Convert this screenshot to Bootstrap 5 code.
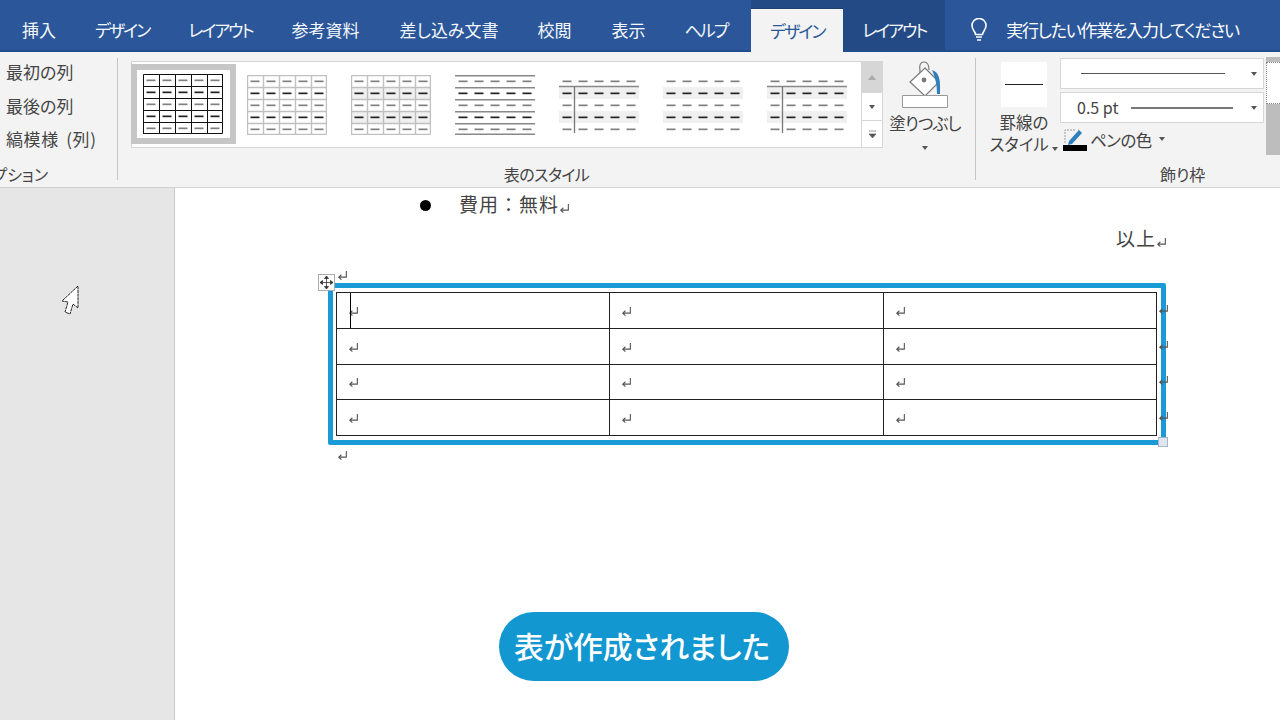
<!DOCTYPE html>
<html lang="ja">
<head>
  <meta charset="UTF-8" />
  <meta name="viewport" content="width=device-width, initial-scale=1.0"/>
  <title>表のデザイン</title>
  <link href="https://cdn.jsdelivr.net/npm/bootstrap@5.3.0/dist/css/bootstrap.min.css" rel="stylesheet"/>
  <style>
    html, body { height: 720px; overflow: hidden; }
    body {
      width: 1280px;
      font-family: "Noto Sans CJK JP", "Liberation Sans", sans-serif;
      font-feature-settings: "palt";
      color: #3a3a3a;
      background: #fff;
    }

    /* タブ */
    .tabbar { height: 52px; background: #2b579a; color: #fff; border-bottom: 2px solid #1f4c8c; font-size: 17px; }
    .tabitem { padding: 0 19.5px; line-height: 60px; height: 50px; white-space: nowrap; color: #f4f7fb; }
    .tabitem:first-child { margin-left: 2.5px; }
    .tabshift { margin-left: 1px; }
    .kanatight { letter-spacing: -2px; }
    .ctxgroup { background: #234a84; height: 50px; margin-left: 4.5px; }
    .ctxgroup .tabitem:first-child { margin-left: 0; }
    .tabactive { background: #f3f3f3; color: #2b579a; height: 44px; margin-top: 8px; line-height: 44px; width: 92px; text-align: center; padding: 0; border-top: 1px solid #1f3f70; }
    .tabdark { width: 102px; padding: 0; text-align: center; }
    .tellme { margin-left: 24px; gap: 17px; line-height: 60px; height: 50px; letter-spacing: -1.3px; }
    .tellme svg { margin-top: 18px; }

    /* リボン */
    .ribbon { height: 136px; background: #f3f3f3; border-bottom: 1px solid #d2d2d2; font-size: 16.5px; color: #444; overflow: hidden; }
    .rgroup { height: 135px; flex: none; }
    .rbody { height: 107px; }
    .rlabel { height: 28px; line-height: 30px; font-size: 16px; white-space: nowrap; }
    .rsep { width: 1px; height: 122px; margin-top: 6px; background: #c4c4c4; flex: none; }
    .optgroup { width: 117px; }
    .optrow { height: 33.5px; line-height: 33px; padding-left: 6px; white-space: nowrap; font-size: 17px; }
    .optwide { letter-spacing: .6px; word-spacing: 3px; }
    .optlist { padding-top: 3px; }
    .optlabel { padding-right: 69px; }
    .stylegroup { width: 857px; }
    .stylelabel { letter-spacing: -.6px; }
    .gallery { margin: 9px 0 0 13px; width: 752px; height: 87px; background: #fff; border: 1px solid #d6d6d6; }
    .tileitem { width: 104px; height: 85px; flex: none; }
    .tilesel { border: 6px solid #c6c6c6; height: 80px; width: 105px; margin: 2px -1px 0 -1px; padding-right: 2px; flex: none; }
    .gscroll { width: 21px; border-left: 1px solid #d6d6d6; margin-left: auto; flex: none; }
    .gbtn { flex: 1; }
    .gbtnoff { background: #d6d6d6; height: 31px; flex: none; }
    .gbtnmid { border-bottom: 1px solid #d6d6d6; height: 28px; flex: none; }
    .fillbtn { width: 76px; margin-left: 4px; margin-top: 7px; font-size: 16.5px; line-height: 20px; letter-spacing: -.8px; }
    .fillcaret { display: block; margin: 4px auto 0; }
    .bordergroup { width: 412px; }
    .borderlabel { padding-left: 184px; }
    .penstyle { width: 86px; padding-top: 10px; font-size: 16.5px; line-height: 22px; text-align: center; margin-left: 5px; flex: none; }
    .penbox { width: 46px; height: 45px; background: #fff; margin: 0 auto 4px; }
    .penright { width: 204px; padding-top: 6px; margin-left: -7px; flex: none; }
    .pensel { height: 31px; background: #fff; border: 1px solid #d6d6d6; padding: 0 6px 0 20px; font-size: 16px; line-height: 1.2; margin-bottom: 3px; }
    .penline { flex: 1; height: 1px; background: #555; margin: 0 26px 0 0; }
    .penthick { background: #777; margin: 0 18px 0 13px; height: 2px; }
    .pencolor { margin: 4px 0 0 3px; gap: 3px; font-size: 16.5px; line-height: 1.2; letter-spacing: -.5px; }
    .pentext { margin-top: 4px; }
    .caret { width: 0; height: 0; border-left: 3px solid transparent; border-right: 3px solid transparent; border-top: 4px solid #555; display: inline-block; }
    .gallerythumb { width: 14px; height: 98px; background: #bdbdbd; margin: 5px 0 0 2px; flex: none; }
    .thumbtop { height: 42px; margin-top: 5px; background: #fff; border-left: 1px dotted #888; border-top: 1px dotted #888; border-bottom: 1px dotted #888; }

    /* 本文 */
    .workarea { height: 532px; }
    .sidearea { width: 175px; background: #e6e6e6; border-right: 1px solid #c9c9c9; flex: none; position: relative; }
    .pagearea { flex: 1; padding-left: 143px; font-family: "Liberation Serif", "Noto Sans CJK JP", serif; font-size: 19px; letter-spacing: 1px; font-feature-settings: normal; color: #444; }
    .bulletline { margin-left: 102px; height: 36px; gap: 28px; line-height: 34px; }
    .bulletdot { width: 11px; height: 11px; background: #000; border-radius: 50%; flex: none; margin-top: 12px; }
    .rightline { width: 849px; text-align: right; height: 28px; line-height: 28px; margin-top: 2px; }
    .markline { height: 13px; padding-left: 19px; margin-top: 16px; position: relative; }
    .marklow { height: 17px; margin-top: 5px; }
    .tablewrap { width: 838px; margin-left: 10px; height: 162px; border: 5px solid #1a9ad6; padding: 4px 0 0 3px; position: relative; border-radius: 2px; }
    .doctable { table-layout: fixed; width: 820px; margin: 0; border-color: #222; }
    .doctable td { height: 35.75px; padding: 2px 0 0 11px; vertical-align: middle; border: 1px solid #222; line-height: 1; position: relative; }
    .caretbar { position: absolute; left: 13px; top: 0; bottom: 0; width: 1px; background: #000; }
    .movehandle { position: absolute; left: 143px; top: 86px; width: 17px; height: 17px; background: #fff; border: 1px solid #aaa; display: flex; align-items: center; justify-content: center; z-index: 2; }
    .rowmark { position: absolute; left: 825px; width: 8px; }
    .sizehandle { position: absolute; right: -7px; bottom: -7px; width: 10px; height: 10px; background: #dfe6ee; border: 1px solid #a9b6c6; }
    .mousearrow { position: absolute; left: 59px; top: 96px; }
    .calloutrow { margin-top: 145px; padding-left: 181px; width: 1000px; }
    .callout { background: #1397d1; color: #fff; width: 290px; height: 69px; line-height: 67px; padding-right: 4px; text-align: center; font-family: "Noto Sans CJK JP", sans-serif; font-feature-settings: "palt"; letter-spacing: 0; font-size: 29.8px; font-weight: 500; white-space: nowrap; }
  </style>
</head>
<body>

<svg width="0" height="0" class="position-absolute">
  <symbol id="retmark" viewBox="0 0 10 10">
    <path d="M8.500 1v5.500H2M4 4.300 1.600 6.500 4 8.700" fill="none" stroke="#555" stroke-width="1"/>
  </symbol>
</svg>

<!-- タブ -->
<div class="tabbar d-flex align-items-start">
  <div class="tabitem">挿入</div>
  <div class="tabitem kanatight">デザイン</div>
  <div class="tabitem kanatight">レイアウト</div>
  <div class="tabitem">参考資料</div>
  <div class="tabitem tabshift">差し込み文書</div>
  <div class="tabitem">校閲</div>
  <div class="tabitem tabshift">表示</div>
  <div class="tabitem kanatight">ヘルプ</div>
  <div class="ctxgroup d-flex">
    <div class="tabitem tabactive kanatight">デザイン</div>
    <div class="tabitem tabdark kanatight">レイアウト</div>
  </div>
  <div class="tellme d-flex">
    <svg width="20" height="24" viewBox="0 0 20 24"><path d="M6.500 16.500c0-3-3.500-4.500-3.500-9a7 7 0 0 1 14 0c0 4.500-3.500 6-3.500 9zM7 19h6M8 22h4" fill="none" stroke="#fff" stroke-width="1.600"/></svg>
    <span>実行したい作業を入力してください</span>
  </div>
</div>

<!-- リボン -->
<div class="ribbon d-flex">
  <div class="rgroup optgroup d-flex flex-column">
    <div class="rbody optlist">
      <div class="optrow">最初の列</div>
      <div class="optrow">最後の列</div>
      <div class="optrow optwide">縞模様 (列)</div>
    </div>
    <div class="rlabel optlabel d-flex justify-content-end">表スタイルのオプション</div>
  </div>
  <div class="rsep"></div>

  <div class="rgroup stylegroup d-flex flex-column">
    <div class="rbody d-flex">
      <div class="gallery d-flex" id="gallery">
        <div class="gscroll d-flex flex-column">
          <div class="gbtnoff d-flex align-items-center justify-content-center"><svg width="8" height="5"><path d="M0 5 4 0l4 5z" fill="#aaa"/></svg></div>
          <div class="gbtnmid d-flex align-items-center justify-content-center"><span class="caret"></span></div>
          <div class="gbtn d-flex align-items-center justify-content-center"><svg width="9" height="9"><path d="M1 1h7M1 4h7l-3.500 4z" fill="#555" stroke="#555" stroke-width=".6"/></svg></div>
        </div>
      </div>
      <div class="fillbtn text-center">
        <svg width="48" height="50" viewBox="0 0 48 50" class="d-block mx-auto">
          <path d="M23 3c-4 0-5 4-4 9v6" fill="none" stroke="#777" stroke-width="1.200"/>
          <path d="M23 3c3 0 5 3 5 8" fill="none" stroke="#777" stroke-width="1.200"/>
          <path d="M24 9 38 23 24 37 9 23z" fill="#fff" stroke="#777" stroke-width="1.200"/>
          <circle cx="23" cy="21" r="2.400" fill="#777"/>
          <path d="M31 11c6 2 9 7 8 24h-3c0-8-1-14-5-24z" fill="#2e7fbd"/>
          <path d="M1.500 36.500h45v12h-45z" fill="#fff" stroke="#999"/>
        </svg>
        <div class="mt-1">塗りつぶし</div>
        <span class="caret fillcaret"></span>
      </div>
    </div>
    <div class="rlabel text-center stylelabel">表のスタイル</div>
  </div>
  <div class="rsep"></div>

  <div class="rgroup bordergroup d-flex flex-column">
    <div class="rbody d-flex">
      <div class="penstyle">
        <div class="penbox d-flex align-items-center justify-content-center"><svg width="38" height="2"><path d="M0 .5h38" stroke="#222"/></svg></div>
        <div>罫線の</div>
        <div class="text-nowrap">スタイル <span class="caret"></span></div>
      </div>
      <div class="penright">
        <div class="pensel d-flex align-items-center"><div class="penline"></div><span class="caret"></span></div>
        <div class="pensel d-flex align-items-center ps-3"><span>0.5 pt</span><div class="penline penthick"></div><span class="caret"></span></div>
        <div class="pencolor d-flex align-items-center">
          <svg width="24" height="24" viewBox="0 0 24 24">
            <path d="M2 16V3h10M15 3h1" fill="none" stroke="#999" stroke-dasharray="2 1"/>
            <path d="M6 14 16 3l3 3-10 11-4 1z" fill="#2e7fbd"/>
            <path d="M0 18h24v6H0z" fill="#000"/>
          </svg>
          <span class="pentext">ペンの色</span>
          <span class="caret ms-1"></span>
        </div>
      </div>
      <div class="gallerythumb"><div class="thumbtop"></div></div>
    </div>
    <div class="rlabel borderlabel">飾り枠</div>
  </div>
</div>

<!-- 本文 -->
<div class="workarea d-flex">
  <div class="sidearea">
    <svg class="mousearrow" width="22" height="32" viewBox="0 0 22 32">
      <path d="M19 2 3 17l6 1-3 10 5 2 3-10 5 4z" fill="#fff" stroke="#222" stroke-width="1" stroke-dasharray="3 .6"/>
    </svg>
  </div>
  <div class="pagearea position-relative">
    <div class="bulletline d-flex">
      <span class="bulletdot"></span>
      <span class="d-flex align-items-center">費用：無料<svg width="11" height="11" class="mt-1"><use href="#retmark"/></svg></span>
    </div>
    <div class="rightline d-flex justify-content-end align-items-center">以上<svg width="11" height="11" class="mt-1"><use href="#retmark"/></svg></div>

    <div class="movehandle">
      <svg width="13" height="13" viewBox="0 0 13 13"><path d="M6.500 0v13M0 6.500h13M6.500 0 4.500 2.500h4zM6.500 13l-2-2.500h4zM0 6.500 2.500 4.500v4zM13 6.500l-2.500-2v4z" fill="#333" stroke="#333" stroke-width=".8"/></svg>
    </div>
    <div class="markline"><svg width="11" height="11" class="d-block"><use href="#retmark"/></svg></div>

    <div class="tablewrap" id="tablewrap">
      <table class="table doctable">
        <colgroup><col style="width:273px"><col style="width:274px"><col style="width:273px"></colgroup>
        <tbody id="doctbody"></tbody>
      </table>
      <span class="sizehandle"></span>
    </div>

    <div class="markline marklow"><svg width="11" height="11" class="d-block"><use href="#retmark"/></svg></div>

    <div class="calloutrow">
      <div class="callout rounded-pill">表が作成されました</div>
    </div>
  </div>
</div>

<script>
  // ギャラリーのサムネイル
  function tileSvg(kind) {
    let s = '<svg width="80" height="60" viewBox="0 0 80 60">';
    const rowH = 12;
    const line = kind === 1 ? '#111' : '#c0c0c0';
    // 縞
    if (kind === 3 || kind === 5 || kind === 6 || kind === 7) {
      [1, 3].forEach(r => { s += `<rect x="0" y="${r * rowH}" width="80" height="${rowH}" fill="#f0f0f0"/>`; });
    }
    // ダッシュ
    for (let r = 0; r < 5; r++) {
      for (let c = 0; c < 5; c++) {
        const x = c * 16 + 3.5;
        const y = r * rowH + 6;
        const color = r % 2 ? '#222' : '#808080';
        s += `<rect x="${x}" y="${y - 0.5}" width="9" height="1.7" fill="${color}"/>`;
      }
    }
    // 罫線
    if (kind <= 3) {
      for (let i = 0; i <= 5; i++) {
        const off = i === 5 ? -0.5 : 0.5;
        s += `<path d="M${i * 16} 0V60M0 ${i * 12}H80" stroke="${line}" stroke-width="${kind === 1 ? 1 : 1.4}" transform="translate(${off} ${off})"/>`;
      }
    }
    if (kind === 4) {
      for (let i = 0; i <= 5; i++) {
        s += `<rect x="0" y="${i === 5 ? 58.500 : i * 12}" width="80" height="1.500" fill="#888"/>`;
      }
    }
    if (kind === 5 || kind === 7) {
      s += '<path d="M0 11.500H80" stroke="#888" stroke-width="1.300"/><path d="M15.500 12V58" stroke="#777" stroke-width="1.300"/>';
    }
    return s + '</svg>';
  }

  const gallery = document.getElementById("gallery");
  const scroll = gallery.firstElementChild;
  [1, 2, 3, 4, 5, 6, 7].forEach(k => {
    const d = document.createElement("div");
    d.className = (k === 1 ? "tilesel" : "tileitem") + " d-flex align-items-center justify-content-center";
    d.innerHTML = tileSvg(k);
    gallery.insertBefore(d, scroll);
  });

  // 表の中身
  const mark = '<svg width="11" height="11" class="d-block"><use href="#retmark"/></svg>';
  const tbody = document.getElementById("doctbody");
  for (let r = 0; r < 4; r++) {
    const tr = document.createElement("tr");
    for (let c = 0; c < 3; c++) {
      const bar = r === 0 && c === 0 ? '<span class="caretbar"></span>' : '';
      tr.innerHTML += `<td>${bar}${mark}</td>`;
    }
    tbody.appendChild(tr);
  }
  // 行末マーク
  const wrap = document.getElementById("tablewrap");
  for (let r = 0; r < 4; r++) {
    const m = document.createElement("span");
    m.className = "rowmark";
    m.style.top = (16 + r * 35.5) + "px";
    m.innerHTML = '<svg width="11" height="11" class="d-block"><use href="#retmark"/></svg>';
    wrap.appendChild(m);
  }
</script>

<script src="https://cdn.jsdelivr.net/npm/bootstrap@5.3.0/dist/js/bootstrap.bundle.min.js"></script>
</body>
</html>
